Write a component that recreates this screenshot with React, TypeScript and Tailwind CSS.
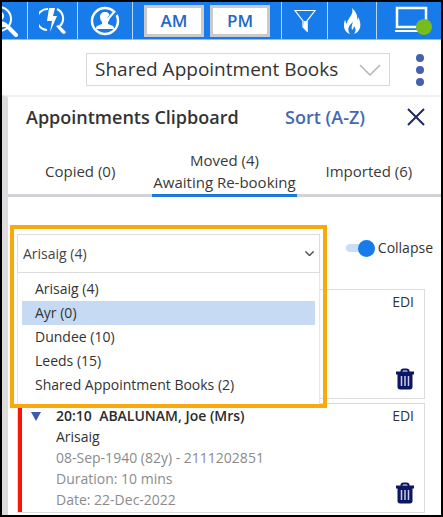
import { useState } from "react";
import type { ReactNode } from "react";

const books = [
  { name: "Arisaig", count: 4 },
  { name: "Ayr", count: 0 },
  { name: "Dundee", count: 10 },
  { name: "Leeds", count: 15 },
  { name: "Shared Appointment Books", count: 2 },
];

function PersonSearchIcon() {
  return (
    <svg width="40" height="32" viewBox="0 0 40 32" className="shrink-0" fill="none" stroke="#fff">
      <circle cx="20" cy="14" r="12" strokeWidth="2" />
      <circle cx="20" cy="11" r="5" fill="#fff" stroke="none" />
      <path d="M10 22c1-4 5-6 10-6s9 2 10 6z" fill="#fff" stroke="none" />
      <path d="M29 22l8 8" strokeWidth="4" strokeLinecap="round" />
    </svg>
  );
}

function QuickSearchIcon() {
  return (
    <svg width="28" height="28" viewBox="0 0 28 28" fill="none" stroke="#fff">
      <path d="M9 2A10.500 10.500 0 0 0 8 23M18 2a10.500 10.500 0 0 1 3 17" strokeWidth="2" />
      <path d="M10 1h6l-2 8h4l-7 16 2-11H8z" fill="#fff" stroke="none" />
      <path d="M20 18l-3 1 6 7c2 2 5 0 3-2z" fill="#fff" stroke="none" />
    </svg>
  );
}

function NoPersonIcon() {
  return (
    <svg width="30" height="30" viewBox="0 0 30 30" fill="none">
      <circle cx="15" cy="15" r="13" stroke="#fff" strokeWidth="2.500" />
      <path
        d="M15 6c3 0 5 2 5 5 0 2-1 4-2 5v2l5 2c1 1 1 2 1 3H6c0-1 0-2 1-3l5-2v-2c-1-1-2-3-2-5 0-3 2-5 5-5z"
        fill="#fff"
      />
      <path d="M19 13l7-7" stroke="#187bea" strokeWidth="5" />
      <path d="M18 13l7-8" stroke="#fff" strokeWidth="2" />
    </svg>
  );
}

function FilterIcon() {
  return (
    <svg width="22" height="24" viewBox="0 0 22 24" fill="none">
      <path d="M1 1.500h20L13 12v10l-4-4v-6z" stroke="#fff" strokeWidth="1.200" />
      <path d="M10 12h3.500v11L9 18z" fill="#fff" />
    </svg>
  );
}

function FlameIcon() {
  return (
    <svg width="18" height="28" viewBox="0 0 18 28">
      <path
        d="M9 1c4 4 6 7 5 12 1-1 1-2 1-3 3 5 3 10 1 13-1 2-3 3-5 4 2-3 2-5 0-8 0 2-1 3-2 4-1-3 0-5 1-8-5 4-6 8-3 12-4-1-6-5-6-8 0-2 0-4 1-6 1 2 1 3 2 4 0-3 1-4 3-7s3-5 2-9z"
        fill="#fff"
      />
    </svg>
  );
}

function LaptopIcon() {
  return (
    <svg width="40" height="29" viewBox="0 0 40 29" fill="none">
      <rect x="4" y="2" width="29" height="19" stroke="#fff" strokeWidth="2.500" />
      <path d="M2 25h28" stroke="#fff" strokeWidth="2" />
      <circle cx="31" cy="21" r="8" fill="#76bc1c" />
    </svg>
  );
}

function ChevronIcon({ className }: { className: string }) {
  return (
    <svg viewBox="0 0 22 12" fill="none" stroke="currentColor" strokeWidth="1.500" className={className}>
      <path d="M1 1l10 10L21 1" vectorEffect="non-scaling-stroke" />
    </svg>
  );
}

function TrashIcon() {
  return (
    <svg width="18" height="22" viewBox="0 0 18 22" fill="none">
      <path d="M5.500 4V3c0-1 1-1.500 2-1.500h3c1 0 2 .5 2 1.500v1" stroke="#0b1664" strokeWidth="2" />
      <path d="M0 3.500h18v3H0z" fill="#0b1664" />
      <path d="M1.500 6h15v13c0 1.500-1 2.500-2.500 2.500H4c-1.500 0-2.500-1-2.500-2.500z" fill="#0b1664" />
      <path d="M5.500 8v10M9 8v10M12.500 8v10" stroke="#c9cdea" strokeWidth="1.500" />
    </svg>
  );
}

function ToolButton({ label, className, children }: { label: string; className: string; children: ReactNode }) {
  return (
    <button aria-label={label} className={`flex shrink-0 items-center justify-center overflow-hidden border-white/70 ${className}`}>
      {children}
    </button>
  );
}

function Toolbar() {
  return (
    <header className="flex h-[38px] border-b border-[#8fc0f5] bg-[#187bea]">
      <ToolButton label="Find patient" className="w-[26px] justify-end border-r pr-2">
        <PersonSearchIcon />
      </ToolButton>
      <ToolButton label="Quick search" className="w-[50px] border-r">
        <QuickSearchIcon />
      </ToolButton>
      <ToolButton label="Unregistered" className="w-[55px] border-r">
        <NoPersonIcon />
      </ToolButton>
      <div className="flex flex-1 items-center justify-center gap-[6px]">
        {["AM", "PM"].map((half) => (
          <button
            key={half}
            className="h-[32px] w-[60px] border-[3px] border-[#cbc9cb] bg-white text-[17px] leading-[24px] font-semibold text-[#2268c4]"
          >
            {half}
          </button>
        ))}
      </div>
      <ToolButton label="Filter" className="w-[46px] border-l">
        <FilterIcon />
      </ToolButton>
      <ToolButton label="Urgent" className="w-[49px] border-l">
        <FlameIcon />
      </ToolButton>
      <ToolButton label="Workstation" className="w-[65px] border-l pl-2">
        <LaptopIcon />
      </ToolButton>
    </header>
  );
}

function Tab({ active, onClick, children }: { active: boolean; onClick: () => void; children: ReactNode }) {
  return (
    <button
      role="tab"
      aria-selected={active}
      onClick={onClick}
      className={`flex-1 border-b-[3px] text-[15px] leading-[22px] whitespace-nowrap text-[#3a3a3a] ${
        active ? "border-[#1b78dc]" : "border-[#d3d2d6]"
      }`}
    >
      {children}
    </button>
  );
}

function Card({ children }: { children?: ReactNode }) {
  return (
    <article className="flex h-[110px] justify-between border border-[#dcdcdc] bg-white">
      <div className="flex border-l-[4px] border-[#fb1408]">{children}</div>
      <div className="flex flex-col items-end justify-between pt-[2px] pr-[10px] pb-[8px]">
        <span className="text-[14px] leading-[20px] font-medium text-[#333]">EDI</span>
        <button aria-label="Delete">
          <TrashIcon />
        </button>
      </div>
    </article>
  );
}

export default function App() {
  const [tab, setTab] = useState("moved");
  const [book, setBook] = useState("Arisaig");
  const [hovered, setHovered] = useState("Ayr");
  const [collapsed, setCollapsed] = useState(true);

  return (
    <div className="flex min-h-screen flex-col border-2 border-black bg-white font-['Open_Sans','Noto_Sans',sans-serif] text-[#333]">
      <Toolbar />

      <div className="flex items-center justify-end gap-[26px] pt-[13px] pr-[17px] pb-[9px]">
        <div className="relative">
          <select
            aria-label="Appointment book"
            className="h-[33px] w-[304px] appearance-none rounded-none border border-[#d8d8d8] bg-white pl-[8px] text-[19px] text-[#333]"
          >
            <option>Shared Appointment Books</option>
          </select>
          <ChevronIcon className="pointer-events-none absolute top-[11px] right-[9px] h-[12px] w-[22px] text-[#b5b5b5]" />
        </div>
        <button aria-label="More" className="flex flex-col gap-[4px]">
          <span className="size-[8px] rounded-full bg-[#4560b0]" />
          <span className="size-[8px] rounded-full bg-[#4560b0]" />
          <span className="size-[8px] rounded-full bg-[#4560b0]" />
        </button>
      </div>

      <main className="flex-1 border-t-2 border-l-[6px] border-t-[#f0f0f0] border-l-[#dddbdd]">
        <div className="flex h-[51px] items-center pt-[2px] pr-[16px] pb-[13px] pl-[18px] whitespace-nowrap">
          <h1 className="flex-1 text-[18px] leading-[24px] font-semibold">Appointments Clipboard</h1>
          <button className="mr-[42px] text-[18px] leading-[24px] font-semibold text-[#4468b4]">Sort (A-Z)</button>
          <button aria-label="Close">
            <svg width="18" height="18" viewBox="0 0 18 18" stroke="#1f2a5c" strokeWidth="2">
              <path d="M1 1l16 16M17 1L1 17" />
            </svg>
          </button>
        </div>

        <div role="tablist" className="flex h-[49px]">
          <Tab active={tab === "copied"} onClick={() => setTab("copied")}>
            Copied (0)
          </Tab>
          <Tab active={tab === "moved"} onClick={() => setTab("moved")}>
            Moved (4)
            <br />
            Awaiting Re-booking
          </Tab>
          <Tab active={tab === "imported"} onClick={() => setTab("imported")}>
            Imported (6)
          </Tab>
        </div>

        <div className="mt-[37px] flex items-start justify-between pr-[8px] pl-[9px]">
          <div className="relative">
            <select
              aria-label="Filter by book"
              value={book}
              onChange={(e) => setBook(e.target.value)}
              className="h-[39px] w-[303px] appearance-none rounded-none border border-[#dcdcdc] bg-white pl-[5px] text-[14px] text-[#444]"
            >
              {books.map((b) => (
                <option key={b.name} value={b.name}>
                  {b.name} ({b.count})
                </option>
              ))}
            </select>
            <ChevronIcon className="pointer-events-none absolute top-[17px] right-[6px] h-[5px] w-[9px] text-[#555]" />

            {/* open list with its highlight frame */}
            <ul
              role="listbox"
              aria-label="Books"
              className="absolute top-[39px] left-0 z-10 h-[132px] w-full border-x border-[#e4e8ee] bg-white px-[4px] pt-[4px]"
            >
              {books.map((b) => (
                <li
                  key={b.name}
                  role="option"
                  aria-selected={b.name === book}
                  onMouseEnter={() => setHovered(b.name)}
                  onClick={() => setBook(b.name)}
                  className={`h-[24px] pl-[13px] text-[14px] leading-[24px] ${hovered === b.name ? "bg-[#c6daf3]" : ""}`}
                >
                  {b.name} ({b.count})
                </li>
              ))}
            </ul>
            <div className="pointer-events-none absolute -top-[9px] -right-[7px] -left-[7px] z-20 h-[183px] border-4 border-[#f9a90c]" />
          </div>

          <label className="flex items-center gap-[3px] text-[14px] leading-[28px]">
            <input
              type="checkbox"
              checked={collapsed}
              onChange={(e) => setCollapsed(e.target.checked)}
              className="peer sr-only"
            />
            <span className="flex h-[8px] w-[29px] items-center justify-start rounded-full bg-[#c9ddf7] peer-checked:justify-end">
              <span className="size-[17px] rounded-full bg-[#187bea]" />
            </span>
            Collapse
          </label>
        </div>

        <div className="mt-[16px] mr-[16px] ml-[9px] flex flex-col gap-[4px]">
          <Card />
          <Card>
            <svg width="10" height="9" viewBox="0 0 10 9" className="mt-[8px] ml-[9px]">
              <path d="M0 0h10L5 9z" fill="#3b5cb0" />
            </svg>
            <div className="ml-[15px] pt-px text-[14px] leading-[21px] whitespace-nowrap text-[#8b8b8b]">
              <p className="font-semibold text-[#2c2c2c]">20:10&nbsp; ABALUNAM, Joe (Mrs)</p>
              <p className="text-[#333]">Arisaig</p>
              <p>08-Sep-1940 (82y) - 2111202851</p>
              <p>Duration: 10 mins</p>
              <p>Date: 22-Dec-2022</p>
            </div>
          </Card>
        </div>
      </main>
    </div>
  );
}
